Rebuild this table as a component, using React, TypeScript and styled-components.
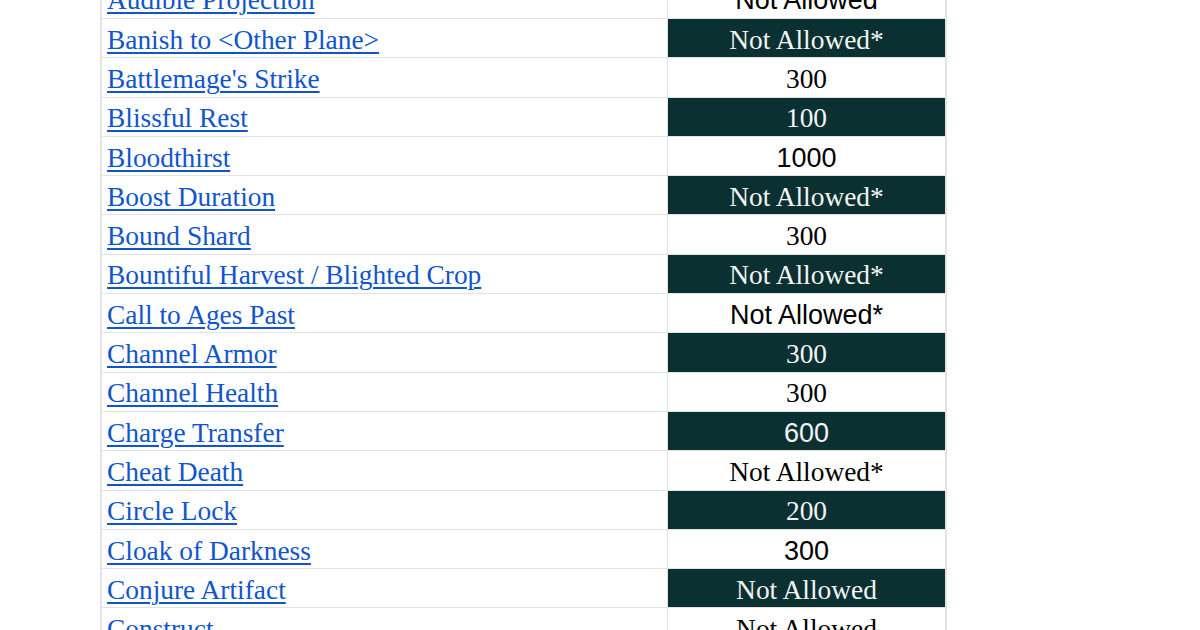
import React from 'react';
import styled, { createGlobalStyle } from 'styled-components';

interface Spell {
  name: string;
  cost: string;
  dark?: boolean;
  sans?: boolean;
}

const spells: Spell[] = [
  { name: 'Audible Projection', cost: 'Not Allowed', sans: true },
  { name: 'Banish to <Other Plane>', cost: 'Not Allowed*', dark: true },
  { name: "Battlemage's Strike", cost: '300' },
  { name: 'Blissful Rest', cost: '100', dark: true },
  { name: 'Bloodthirst', cost: '1000', sans: true },
  { name: 'Boost Duration', cost: 'Not Allowed*', dark: true },
  { name: 'Bound Shard', cost: '300' },
  { name: 'Bountiful Harvest / Blighted Crop', cost: 'Not Allowed*', dark: true },
  { name: 'Call to Ages Past', cost: 'Not Allowed*', sans: true },
  { name: 'Channel Armor', cost: '300', dark: true },
  { name: 'Channel Health', cost: '300' },
  { name: 'Charge Transfer', cost: '600', dark: true, sans: true },
  { name: 'Cheat Death', cost: 'Not Allowed*' },
  { name: 'Circle Lock', cost: '200', dark: true },
  { name: 'Cloak of Darkness', cost: '300', sans: true },
  { name: 'Conjure Artifact', cost: 'Not Allowed', dark: true },
  { name: 'Construct', cost: 'Not Allowed' },
];

const App = () => {
  return (
    <>
      <GlobalStyle />
      <Page>
        <Sheet>
          {spells.map((spell) => (
            <Row key={spell.name}>
              <NameCell>
                <SpellLink href="#">{spell.name}</SpellLink>
              </NameCell>
              <CostCell $dark={spell.dark} $sans={spell.sans}>
                {spell.cost}
              </CostCell>
            </Row>
          ))}
        </Sheet>
      </Page>
    </>
  );
};

const GlobalStyle = createGlobalStyle`
  html, body {
    margin: 0;
    padding: 0;
    background: #ffffff;
  }
`;

const Page = styled.div`
  width: 1200px;
  height: 630px;
  overflow: hidden;
  background: #ffffff;
`;

const Sheet = styled.div`
  margin: -20.3px 0 0 100px;
  width: 847px;
  display: flex;
  flex-direction: column;
  border-left: 2px solid #e3e3e3;
  border-right: 2px solid #e3e3e3;
  box-sizing: border-box;
`;

const Row = styled.div`
  display: grid;
  grid-template-columns: 566px 277px;
  height: 39.3px;
  box-sizing: border-box;
  border-bottom: 1.5px solid #e2e2e2;
`;

const NameCell = styled.div`
  display: flex;
  align-items: center;
  padding: 4px 0 0 5px;
  border-right: 1px solid #e2e2e2;
  font-family: "Liberation Serif", "Times New Roman", serif;
  font-size: 27.4px;
  white-space: nowrap;
  overflow: hidden;
`;

const SpellLink = styled.a`
  color: #1155cc;
  text-decoration: underline;
  text-underline-offset: 3px;
  text-decoration-thickness: 1.5px;
`;

const CostCell = styled.div<{ $dark?: boolean; $sans?: boolean }>`
  display: flex;
  align-items: center;
  justify-content: center;
  padding-top: 4px;
  background: ${(p) => (p.$dark ? '#0b3031' : '#ffffff')};
  color: ${(p) => (p.$dark ? '#f4f4f4' : '#000000')};
  font-family: ${(p) =>
    p.$sans
      ? '"Liberation Sans", Arial, sans-serif'
      : '"Liberation Serif", "Times New Roman", serif'};
  font-size: ${(p) => (p.$sans ? '27px' : '27.4px')};
  white-space: nowrap;
`;

export default App;
